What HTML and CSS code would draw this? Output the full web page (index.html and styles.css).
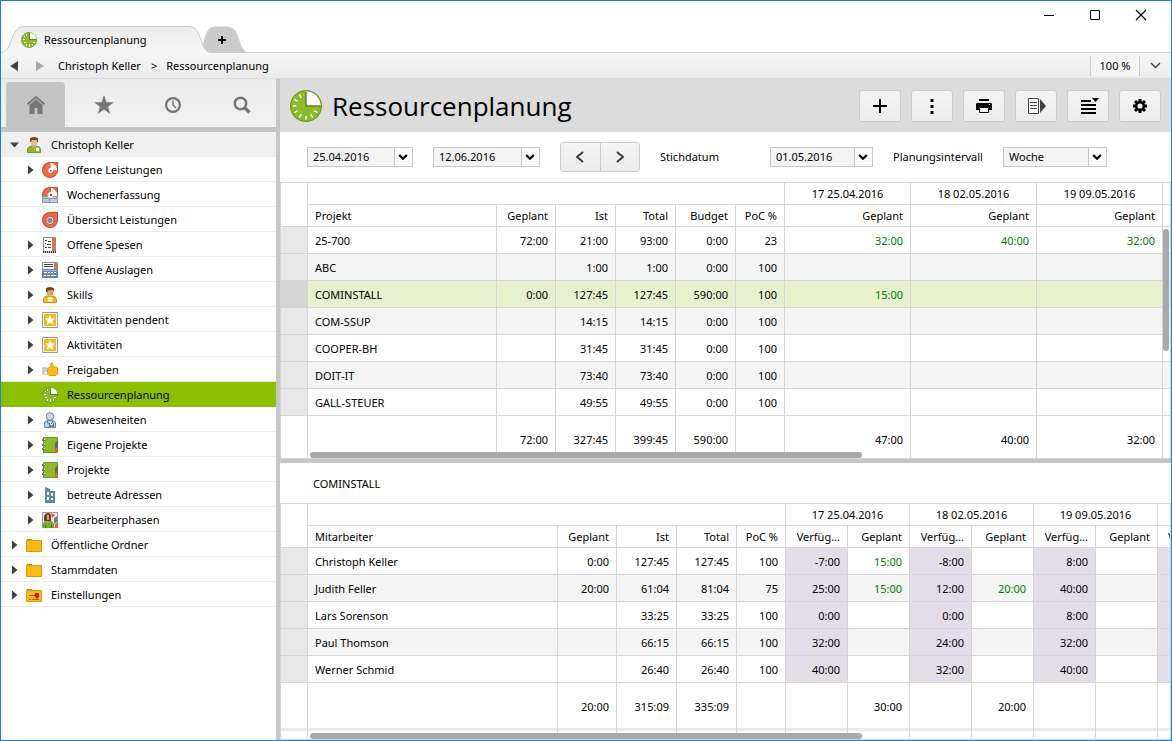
FILE: index.html
```html
<!DOCTYPE html>
<html lang="de">
<head>
<meta charset="utf-8">
<title>Ressourcenplanung</title>
<link rel="stylesheet" href="styles.css">
</head>
<body>
<svg class="sprite" aria-hidden="true">
  <symbol id="i-clock" viewBox="0 0 32 32">
    <circle cx="16" cy="16" r="15.4" fill="#8dba28" stroke="#6d9a22" stroke-width="1.2"/>
    <path d="M16 1.4A14.6 14.6 0 0 1 30.6 16H16z" fill="#fff"/>
    <path d="M16 2v14h14.5" fill="none" stroke="#5f7d2c" stroke-width="1.4"/>
    <g stroke="#fff" stroke-width="1.4"><path d="M16 26v3.500M3 16h3.500M11.300 7.800l-2-3.400M7.800 11.300L4.400 9.300M7.800 20.700l-3.400 2M11.300 24.200l-2 3.400M20.700 24.200l2 3.400M24.200 20.700l3.400 2"/></g>
  </symbol>
  <symbol id="i-clock-s" viewBox="0 0 16 16">
    <circle cx="8" cy="8" r="7.600" fill="#8dba28" stroke="#6d9a22" stroke-width=".8"/>
    <path d="M9 0.700A7.300 7.300 0 0 1 15.300 7H9z" fill="#fff"/>
    <path d="M8.500 1v6.500h6.700" fill="none" stroke="#5f7d2c"/>
    <g fill="#fff"><path d="M2 7h2v1H2zM3 4h1v1H3zM5 2h1v2H5zM3 11h2v-1H3zM5 12h1v2H5zM8 12h1v3H8zM11 12h1v2h-1zM12 10h2v1h-2z"/></g>
  </symbol>
  <symbol id="i-user" viewBox="0 0 16 16">
    <path d="M1.500 15.500v-3q0-3 4-3.500h5q4 .5 4 3.500v3z" fill="#8dba28" stroke="#6d9a22"/>
    <path d="M6 7h4v2.500L8 11 6 9.500z" fill="#dba57f"/><path d="M5 2h6v4q0 2.500-3 2.500T5 6z" fill="#e8b795"/>
    <path d="M4 5V1.500Q5 0 8 0t4 1.500V5h-1V3H6L5 5z" fill="#7b3f17"/><path d="M10 11h3v3h-3z" fill="#fff"/>
  </symbol>
  <symbol id="i-disc" viewBox="0 0 16 16">
    <path d="M8 0h8v8a8 8 0 1 1-8-8z" fill="#c94a2a"/><path d="M8 1h7v7a7 7 0 1 1-7-7z" fill="#ec6a43"/>
    <path d="M8.500 1h2.500l4 4.500V8L9 8.500z" fill="#fff"/><path d="M10.500 1l4.500 5V1z" fill="#ec6a43"/><path d="M12 1.500l2.500 3-1 1.500z" fill="#fff"/>
    <circle cx="8.500" cy="8.500" r="2.400" fill="#fff"/><path d="M8 8h1.500v1.500H8z" fill="#b5402a"/>
  </symbol>
  <symbol id="i-week" viewBox="0 0 16 16">
    <path d="M0 9V7a8 7.500 0 0 1 8-7h8v9z" fill="#c94a2a"/><path d="M1 9V7a7 6.500 0 0 1 7-6h7v8z" fill="#ec6a43"/>
    <path d="M9 1h2l4 4v4H9z" fill="#fff"/><path d="M11 1h4v5z" fill="#ec6a43"/>
    <path d="M0 9h16v7H0z" fill="#7f9bb5"/><path d="M1 10h14v1H1zM1 12h6v3H1zM8 12h7v3H8z" fill="#b8cad9"/>
    <circle cx="8.500" cy="8" r="2.800" fill="#fff"/><path d="M8 7h2v2H8z" fill="#b5402a"/>
  </symbol>
  <symbol id="i-target" viewBox="0 0 16 16">
    <path d="M8 0h8v8a8 8 0 1 1-8-8z" fill="#c94a2a"/><path d="M8 1h7v7a7 7 0 1 1-7-7z" fill="#ec6a43"/>
    <circle cx="8" cy="8.500" r="4" fill="#fff" stroke="#c94a2a"/><circle cx="8" cy="8.500" r="2.700" fill="#6f93b4"/>
  </symbol>
  <symbol id="i-receipt" viewBox="0 0 16 16">
    <path d="M1.500.5h12V15h-12z" fill="#fff" stroke="#8b8b8b"/>
    <path d="M10 1h3v13h-3z" fill="#ec6a43"/><path d="M3 3.500h2M6 4.500h3M3 6.500h1M5 7.500h4M3 10.500h2M6 10.500h3" stroke="#444"/>
    <path d="M1 15h13" stroke="#333" stroke-width="2" stroke-dasharray="1 1"/>
  </symbol>
  <symbol id="i-sheet" viewBox="0 0 16 16">
    <path d="M.5.5h15v8H.5z" fill="#fff" stroke="#8b8b8b"/><path d="M12 1h3v6h-3z" fill="#ec6a43"/>
    <path d="M2 2.500h9M2 4.500h9" stroke="#444"/><path d="M0 7h16v9H0z" fill="#6788a6"/>
    <path d="M1 8h14v1H1z" fill="#a9bfd2"/><path d="M2 10h3v1H2zM6 10h2v1H6zM9 10h2v1H9zM12 10h2v1h-2zM2 13h2v1H2zM5 13h3v1H5zM9 13h5v1H9z" fill="#fff"/>
  </symbol>
  <symbol id="i-skill" viewBox="0 0 16 16">
    <path d="M1.500 15.500v-3Q2 9 5 9h6q3 0 3.500 3.500v3z" fill="#fbb914" stroke="#c8921a"/>
    <path d="M5 2h6v4q0 3-3 3T5 6z" fill="#dca07a"/><path d="M4 5V1.500Q5 0 8 0t4 1.500V5l-1-2H7L5 5z" fill="#7b3f17"/>
    <path d="M7 10v5M9 10v5M5.500 11.500h5M5.500 13.500h5" stroke="#fff"/>
  </symbol>
  <symbol id="i-star-box" viewBox="0 0 16 16">
    <path d="M.5.5h15v15H.5z" fill="#fff" stroke="#999"/><path d="M2 2h12v12H2z" fill="#fbb914"/>
    <path d="M8 3l1.500 3.200 3.500.4-2.500 2.400.7 3.600L8 10.800l-3.200 1.800.7-3.600L3 6.600l3.500-.4z" fill="#fff"/>
  </symbol>
  <symbol id="i-thumb" viewBox="0 0 16 16">
    <path d="M5.500 6.500L8.500 5l.5-4q2-.5 2 1.500V5h4l.5 1v6l-1.500 1.500H7L5.500 12z" fill="#fbb914" stroke="#dc9d14"/>
    <path d="M0 5h5v8H2q-2 0-2-2z" fill="#b9cfe2"/><path d="M2.500 11h3M4 9.500v3" stroke="#fff"/>
  </symbol>
  <symbol id="i-absent" viewBox="0 0 16 16">
    <path d="M2.500 15.500V11q0-2 3.500-2.500h4q3.500.5 3.500 2.500v4.500z" fill="#b9cfe2" stroke="#6788a6"/>
    <circle cx="8" cy="4.500" r="3.800" fill="#c8d9e8" stroke="#6788a6"/>
    <path d="M5.500 9v2l2 1.500M10.500 9v2" fill="none" stroke="#6788a6"/><path d="M7 11h5v4H7z" fill="#557a9b"/><path d="M8.500 11v1.500h2V11M9 14h1" fill="none" stroke="#fff"/>
  </symbol>
  <symbol id="i-book" viewBox="0 0 16 16">
    <path d="M1.500.5h14v15h-14z" fill="#8dba28" stroke="#6d9a22"/>
    <path d="M0 3h3M0 8h3M0 12h3" stroke="#707070" stroke-width="2"/><path d="M2 2h1v1H2zM2 7h1v1H2zM2 11h1v1H2z" fill="#e8e8e8"/>
    <path d="M13 6l3-3v7l-3 2z" fill="#666"/><path d="M13 12l3-1v5h-3z" fill="#ec5a33"/>
  </symbol>
  <symbol id="i-building" viewBox="0 0 16 16">
    <path d="M3 0l5 2v2h5v12H3z" fill="#5f86a9"/><path d="M5 5h2v3H5zM9 6h2v3H9zM5 10h2v3H5zM9 11h2v2H9z" fill="#fff"/>
  </symbol>
  <symbol id="i-phase" viewBox="0 0 16 16">
    <path d="M0 0h16v16H0z" fill="#999"/><path d="M1 1h14v14H1z" fill="#eee"/>
    <path d="M2 9V4q1-3 4-3 3 0 3 3v6z" fill="#70401f"/><path d="M5 3h2v5H5z" fill="#dca07a"/>
    <path d="M1 16v-4q1-3 3-3l2 2 2-2q3 0 4 3v4z" fill="#79ad20"/><path d="M9 1l4 2-3 3z" fill="#e6512c"/>
    <path d="M12 6l3-2v6l-3 2z" fill="#777"/><path d="M13 12l3-2v6h-3z" fill="#ec5a33"/><path d="M3 13h1v3H3zM9 12h1v4H9z" fill="#456b14"/>
  </symbol>
  <symbol id="i-folder" viewBox="0 0 16 16">
    <path d="M1 4V2h5v2z" fill="#b88a1c"/><path d="M.5 3.500h15v11H.5z" fill="#fbb914" stroke="#d5991b"/>
  </symbol>
  <symbol id="i-config" viewBox="0 0 16 16">
    <path d="M1 4V2h5v2z" fill="#b88a1c"/><path d="M.5 3.500h15v11H.5z" fill="#fbb914" stroke="#d5991b"/>
    <path d="M3 8.500h7M3 12.500h2M6 12.500h7" stroke="#8a6a24"/><path d="M9 6h4v4l-2 2-2-2z" fill="#c3201a"/>
  </symbol>
  <symbol id="i-right" viewBox="0 0 6 10"><path d="M0 .5l5.500 4.500L0 9.500z" fill="#404040"/></symbol>
  <symbol id="i-open" viewBox="0 0 9 6"><path d="M0 .5h9L4.500 5.500z" fill="#404040"/></symbol>
  <symbol id="i-drop" viewBox="0 0 10 8"><path d="M1.200 2L5 5.700 8.800 2" fill="none" stroke="#000" stroke-width="2.200"/></symbol>
</svg>

<div class="window">
  <header class="titlebar">
    <svg class="tab-shapes" width="260" height="27" aria-hidden="true">
      <defs><linearGradient id="tabfill" x1="0" y1="0" x2="0" y2="1"><stop offset="0" stop-color="#ececec"/><stop offset="1" stop-color="#f6f6f6"/></linearGradient></defs>
      <path d="M198 26.500C202 24 203 8 208 3Q210 .5 214 .5H225Q230 .5 233 3C238 8 239 23 246 26.500z" fill="#cbcbcb"/>
      <path d="M-1 26.500C12 26 9 1 22 .5H188C202 1 198 24 209 26.500L209 28H-1z" fill="url(#tabfill)"/>
      <path d="M0 26.500C12 26 9 1 22 .5H188C202 1 198 24 209 26.500H260" fill="none" stroke="#c9c9c9"/>
    </svg>
    <nav class="tabs">
      <button class="tab"><svg width="16" height="16"><use href="#i-clock-s"/></svg>Ressourcenplanung</button>
      <button class="tab-add" aria-label="Neuer Tab"><svg width="8" height="8"><path d="M4 0v8M0 4h8" stroke="#000" stroke-width="2"/></svg></button>
    </nav>
    <div class="win-buttons">
      <button aria-label="Minimieren"><svg width="12" height="12"><path d="M1 6.500h10" stroke="#000"/></svg></button>
      <button aria-label="Maximieren"><svg width="12" height="12"><path d="M1.500 1.500h9v9h-9z" fill="none" stroke="#000"/></svg></button>
      <button aria-label="Schliessen"><svg width="12" height="12"><path d="M1 1l10 10M11 1L1 11" stroke="#000" stroke-width="1.100"/></svg></button>
    </div>
  </header>

  <nav class="crumbs">
    <button aria-label="Zurück"><svg width="8" height="10"><path d="M8 0v10L0 5z" fill="#404040"/></svg></button>
    <button aria-label="Vorwärts"><svg width="8" height="10"><path d="M0 0v10l8-5z" fill="#a8a8a8"/></svg></button>
    <a href="#">Christoph Keller</a><span>&gt;</span><a href="#">Ressourcenplanung</a>
    <button class="zoom">100 %</button>
    <button class="zoom-open" aria-label="Zoomstufe wählen"><svg width="11" height="7"><path d="M1 1l4.500 4.500L10 1" fill="none" stroke="#404040" stroke-width="1.400"/></svg></button>
  </nav>

  <div class="body">
    <aside class="sidebar">
      <div class="side-tabs">
        <button class="active" aria-label="Start"><svg width="20" height="20" fill="#757575"><path d="M10 3.800L3.500 9.500V19h5v-6h3v6h5V9.500z"/><path d="M1.500 9.300L10 2l8.500 7.300" fill="none" stroke="#757575" stroke-width="1.800"/><path d="M2.500 10.300L10 3.800l7.500 6.500" fill="none" stroke="#c4c4c4" stroke-width=".8"/></svg></button>
        <button aria-label="Favoriten"><svg width="20" height="20" fill="#757575"><path d="M10 0l2.500 7.200H20l-6 4.600L16.200 19 10 14.600 3.800 19 6 11.800 0 7.200h7.500z"/></svg></button>
        <button aria-label="Verlauf"><svg width="18" height="18" fill="none" stroke="#757575"><circle cx="9" cy="9" r="6.900" stroke-width="2.200"/><path d="M9 4.500V9l3 3" stroke-width="1.400"/></svg></button>
        <button aria-label="Suche"><svg width="18" height="18" fill="none" stroke="#757575"><circle cx="7.500" cy="7.500" r="5.700" stroke-width="2.500"/><path d="M11.500 11.500l5 5" stroke-width="3.200"/></svg></button>
      </div>
      <ul class="tree">
        <li><a class="root" href="#"><span class="arrow"><svg width="9" height="6"><use href="#i-open"/></svg></span><svg class="ico"><use href="#i-user"/></svg>Christoph Keller</a></li>
        <li><a class="sub" href="#"><span class="arrow"><svg width="6" height="10"><use href="#i-right"/></svg></span><svg class="ico"><use href="#i-disc"/></svg>Offene Leistungen</a></li>
        <li><a class="sub" href="#"><span class="arrow"></span><svg class="ico"><use href="#i-week"/></svg>Wochenerfassung</a></li>
        <li><a class="sub" href="#"><span class="arrow"></span><svg class="ico"><use href="#i-target"/></svg>Übersicht Leistungen</a></li>
        <li><a class="sub" href="#"><span class="arrow"><svg width="6" height="10"><use href="#i-right"/></svg></span><svg class="ico"><use href="#i-receipt"/></svg>Offene Spesen</a></li>
        <li><a class="sub" href="#"><span class="arrow"><svg width="6" height="10"><use href="#i-right"/></svg></span><svg class="ico"><use href="#i-sheet"/></svg>Offene Auslagen</a></li>
        <li><a class="sub" href="#"><span class="arrow"><svg width="6" height="10"><use href="#i-right"/></svg></span><svg class="ico"><use href="#i-skill"/></svg>Skills</a></li>
        <li><a class="sub" href="#"><span class="arrow"><svg width="6" height="10"><use href="#i-right"/></svg></span><svg class="ico"><use href="#i-star-box"/></svg>Aktivitäten pendent</a></li>
        <li><a class="sub" href="#"><span class="arrow"><svg width="6" height="10"><use href="#i-right"/></svg></span><svg class="ico"><use href="#i-star-box"/></svg>Aktivitäten</a></li>
        <li><a class="sub" href="#"><span class="arrow"><svg width="6" height="10"><use href="#i-right"/></svg></span><svg class="ico"><use href="#i-thumb"/></svg>Freigaben</a></li>
        <li><a class="sub selected" href="#"><span class="arrow"></span><svg class="ico"><use href="#i-clock-s"/></svg>Ressourcenplanung</a></li>
        <li><a class="sub" href="#"><span class="arrow"><svg width="6" height="10"><use href="#i-right"/></svg></span><svg class="ico"><use href="#i-absent"/></svg>Abwesenheiten</a></li>
        <li><a class="sub" href="#"><span class="arrow"><svg width="6" height="10"><use href="#i-right"/></svg></span><svg class="ico"><use href="#i-book"/></svg>Eigene Projekte</a></li>
        <li><a class="sub" href="#"><span class="arrow"><svg width="6" height="10"><use href="#i-right"/></svg></span><svg class="ico"><use href="#i-book"/></svg>Projekte</a></li>
        <li><a class="sub" href="#"><span class="arrow"><svg width="6" height="10"><use href="#i-right"/></svg></span><svg class="ico"><use href="#i-building"/></svg>betreute Adressen</a></li>
        <li><a class="sub" href="#"><span class="arrow"><svg width="6" height="10"><use href="#i-right"/></svg></span><svg class="ico"><use href="#i-phase"/></svg>Bearbeiterphasen</a></li>
        <li><a href="#"><span class="arrow"><svg width="6" height="10"><use href="#i-right"/></svg></span><svg class="ico"><use href="#i-folder"/></svg>Öffentliche Ordner</a></li>
        <li><a href="#"><span class="arrow"><svg width="6" height="10"><use href="#i-right"/></svg></span><svg class="ico"><use href="#i-folder"/></svg>Stammdaten</a></li>
        <li><a href="#"><span class="arrow"><svg width="6" height="10"><use href="#i-right"/></svg></span><svg class="ico"><use href="#i-config"/></svg>Einstellungen</a></li>
      </ul>
    </aside>

    <main class="main">
      <div class="page-head">
        <svg width="32" height="32"><use href="#i-clock"/></svg>
        <h1>Ressourcenplanung</h1>
        <div class="tools">
          <button aria-label="Neu"><svg width="20" height="20"><path d="M10 3v14M3 10h14" stroke="#000" stroke-width="2"/></svg></button>
          <button aria-label="Mehr"><svg width="20" height="20"><path d="M8.500 3h3v3h-3zM8.500 9h3v3h-3zM8.500 15h3v3h-3z"/></svg></button>
          <button aria-label="Drucken"><svg width="20" height="20"><path d="M5 3h10v2H5zM3 7h14l1 1v6h-3v-3H5v3H2V8z"/><path d="M5.500 11.500h9v5h-9z" fill="#fff" stroke="#000"/><path d="M15 8h1v1h-1z" fill="#fff"/></svg></button>
          <button aria-label="Export"><svg width="20" height="20"><path d="M2.500 2.500h10v15h-10z" fill="#fff" stroke="#404040"/><path d="M4 6.500h7M4 9.500h7M4 12.500h7" stroke="#404040"/><path d="M14 3l6 7-6 7z" fill="#404040"/></svg></button>
          <button aria-label="Ansicht"><svg width="20" height="20"><path d="M3 5h10M3 9h15M3 13h15M3 17h15" stroke="#000" stroke-width="2"/><path d="M14 2h7l-3.500 4z"/></svg></button>
          <button aria-label="Einstellungen"><svg width="20" height="20"><circle cx="10" cy="10" r="5"/><path d="M10 3v14M3 10h14M5 5l10 10M15 5L5 15" stroke="#000" stroke-width="3"/><circle cx="10" cy="10" r="2.600" fill="#f0f0f0"/></svg></button>
        </div>
      </div>

      <form class="filters">
        <span class="combo from"><select aria-label="Von"><option>25.04.2016</option></select><svg width="10" height="8"><use href="#i-drop"/></svg></span>
        <span class="combo to"><select aria-label="Bis"><option>12.06.2016</option></select><svg width="10" height="8"><use href="#i-drop"/></svg></span>
        <div class="pager">
          <button type="button" aria-label="Zurück"><svg width="12" height="12"><path d="M9 1L3 6l6 5" fill="none" stroke="#333" stroke-width="1.800"/></svg></button>
          <button type="button" aria-label="Weiter"><svg width="12" height="12"><path d="M3 1l6 5-6 5" fill="none" stroke="#333" stroke-width="1.800"/></svg></button>
        </div>
        <label class="key" for="key-date">Stichdatum</label>
        <span class="combo date"><select id="key-date"><option>01.05.2016</option></select><svg width="10" height="8"><use href="#i-drop"/></svg></span>
        <label class="interval" for="interval">Planungsintervall</label>
        <span class="combo step"><select id="interval"><option>Woche</option></select><svg width="10" height="8"><use href="#i-drop"/></svg></span>
      </form>

      <section class="pane projects">
        <table>
          <colgroup><col class="w27"><col class="w189"><col class="w59"><col class="w60"><col class="w60"><col class="w60"><col class="w49"><col class="w126"><col class="w126"><col class="w126"><col></colgroup>
          <thead>
            <tr><td rowspan="2"></td><th colspan="6"></th><th class="wk">17 25.04.2016</th><th class="wk">18 02.05.2016</th><th class="wk">19 09.05.2016</th><th></th></tr>
            <tr><th class="name">Projekt</th><th>Geplant</th><th>Ist</th><th>Total</th><th>Budget</th><th>PoC %</th><th>Geplant</th><th>Geplant</th><th>Geplant</th><th></th></tr>
          </thead>
          <tbody>
            <tr><td></td><td>25-700</td><td>72:00</td><td>21:00</td><td>93:00</td><td>0:00</td><td>23</td><td class="plan">32:00</td><td class="plan">40:00</td><td class="plan">32:00</td><td></td></tr>
            <tr><td></td><td>ABC</td><td></td><td>1:00</td><td>1:00</td><td>0:00</td><td>100</td><td></td><td></td><td></td><td></td></tr>
            <tr class="current"><td></td><td>COMINSTALL</td><td>0:00</td><td>127:45</td><td>127:45</td><td>590:00</td><td>100</td><td class="plan">15:00</td><td></td><td></td><td></td></tr>
            <tr><td></td><td>COM-SSUP</td><td></td><td>14:15</td><td>14:15</td><td>0:00</td><td>100</td><td></td><td></td><td></td><td></td></tr>
            <tr><td></td><td>COOPER-BH</td><td></td><td>31:45</td><td>31:45</td><td>0:00</td><td>100</td><td></td><td></td><td></td><td></td></tr>
            <tr><td></td><td>DOIT-IT</td><td></td><td>73:40</td><td>73:40</td><td>0:00</td><td>100</td><td></td><td></td><td></td><td></td></tr>
            <tr><td></td><td>GALL-STEUER</td><td></td><td>49:55</td><td>49:55</td><td>0:00</td><td>100</td><td></td><td></td><td></td><td></td></tr>
          </tbody>
          <tfoot>
            <tr class="totals"><td></td><td></td><td>72:00</td><td>327:45</td><td>399:45</td><td>590:00</td><td></td><td>47:00</td><td>40:00</td><td>32:00</td><td></td></tr>
          </tfoot>
        </table>
        <div class="thumb across"></div>
        <div class="thumb down"></div>
      </section>

      <h2>COMINSTALL</h2>

      <section class="pane staff">
        <table>
          <colgroup><col class="w27"><col class="w250"><col class="w59"><col class="w60"><col class="w60"><col class="w49"><col class="w62"><col class="w62"><col class="w62"><col class="w62"><col class="w62"><col class="w62"><col></colgroup>
          <thead>
            <tr><td rowspan="2"></td><th colspan="5"></th><th class="wk" colspan="2">17 25.04.2016</th><th class="wk" colspan="2">18 02.05.2016</th><th class="wk" colspan="2">19 09.05.2016</th><th></th></tr>
            <tr><th class="name">Mitarbeiter</th><th>Geplant</th><th>Ist</th><th>Total</th><th>PoC %</th><th>Verfüg...</th><th>Geplant</th><th>Verfüg...</th><th>Geplant</th><th>Verfüg...</th><th>Geplant</th><th class="cut">Verfüg...</th></tr>
          </thead>
          <tbody>
            <tr><td></td><td>Christoph Keller</td><td>0:00</td><td>127:45</td><td>127:45</td><td>100</td><td class="free">-7:00</td><td class="plan">15:00</td><td class="free">-8:00</td><td></td><td class="free">8:00</td><td></td><td class="free"></td></tr>
            <tr><td></td><td>Judith Feller</td><td>20:00</td><td>61:04</td><td>81:04</td><td>75</td><td class="free">25:00</td><td class="plan">15:00</td><td class="free">12:00</td><td class="plan">20:00</td><td class="free">40:00</td><td></td><td class="free"></td></tr>
            <tr><td></td><td>Lars Sorenson</td><td></td><td>33:25</td><td>33:25</td><td>100</td><td class="free">0:00</td><td></td><td class="free">0:00</td><td></td><td class="free">8:00</td><td></td><td class="free"></td></tr>
            <tr><td></td><td>Paul Thomson</td><td></td><td>66:15</td><td>66:15</td><td>100</td><td class="free">32:00</td><td></td><td class="free">24:00</td><td></td><td class="free">32:00</td><td></td><td class="free"></td></tr>
            <tr><td></td><td>Werner Schmid</td><td></td><td>26:40</td><td>26:40</td><td>100</td><td class="free">40:00</td><td></td><td class="free">32:00</td><td></td><td class="free">40:00</td><td></td><td class="free"></td></tr>
          </tbody>
          <tfoot>
            <tr class="totals"><td></td><td></td><td>20:00</td><td>315:09</td><td>335:09</td><td></td><td></td><td>30:00</td><td></td><td>20:00</td><td></td><td></td><td></td></tr>
            <tr class="band"><td></td><td></td><td></td><td></td><td></td><td></td><td></td><td></td><td></td><td></td><td></td><td></td><td></td></tr>
            <tr class="rest"><td></td><td></td><td></td><td></td><td></td><td></td><td></td><td></td><td></td><td></td><td></td><td></td><td></td></tr>
          </tfoot>
        </table>
        <div class="thumb across"></div>
      </section>
    </main>
  </div>
</div>
</body>
</html>
```

FILE: styles.css
```css
* { box-sizing: border-box; }

body {
  margin: 0;
  font: 11px/16px "Noto Sans", "Open Sans", sans-serif;
  color: #000;
  background: #fff;
}

button, select { font: inherit; color: inherit; }

button {
  display: flex;
  align-items: center;
  justify-content: center;
  padding: 0;
  border: 0;
  background: none;
}

a { color: inherit; text-decoration: none; }
svg { display: block; flex: none; }
.sprite { position: absolute; width: 0; height: 0; }

.window {
  display: flex;
  flex-direction: column;
  min-height: 100vh;
  border: 1px solid #1883d7;
}

/* Title bar */
.titlebar {
  position: relative;
  display: flex;
  justify-content: space-between;
  height: 52px;
  border-bottom: 1px solid #c9c9c9;
}
.tab-shapes { position: absolute; left: 0; bottom: -1px; }
.tabs { position: relative; display: flex; align-items: flex-end; }
.tab { justify-content: flex-start; gap: 7px; width: 200px; height: 24px; padding-left: 20px; }
.tab-add { width: 42px; height: 24px; }
.win-buttons { display: flex; height: 28px; padding-right: 7px; }
.win-buttons button { width: 46px; }

/* Breadcrumbs */
.crumbs {
  display: flex;
  align-items: center;
  height: 26px;
  border-bottom: 1px solid #dadada;
  background: linear-gradient(#f6f6f6, #ebebeb);
}
.crumbs button:first-child { margin: 0 18px 0 9px; }
.crumbs a { margin-left: 14px; }
.crumbs span { margin: 0 -5px 0 10px; }
.crumbs .zoom {
  width: 50px;
  height: 20px;
  margin-left: auto;
  border: solid #c9c9c9;
  border-width: 0 1px;
  background: #f5f5f5;
}
.crumbs .zoom-open { width: 31px; height: 20px; }

.body { display: flex; flex: 1; }

/* Sidebar */
.sidebar {
  flex: none;
  width: 279px;
  border-right: 4px solid #c6c6c6;
}
.side-tabs {
  display: grid;
  grid-template-columns: 59px 78px 59px 79px;
  height: 53px;
  padding: 3px 0 0 5px;
  border-bottom: 5px solid #c4c4c4;
  background: linear-gradient(#ebebeb, #f1f1f1);
  overflow: hidden;
}
.side-tabs .active { border-radius: 4px 4px 0 0; background: #c4c4c4; }

.tree { margin: 0; padding: 0; list-style: none; }
.tree a {
  display: flex;
  align-items: center;
  height: 25px;
  padding: 1px 0 0 8px;
  border-bottom: 1px solid #ececec;
}
.tree .sub { padding-left: 24px; }
.tree .root { background: #efefef; }
.tree .selected { border-color: #8bbf00; background: #8bbf00; }
.arrow { display: flex; justify-content: center; width: 11px; margin-right: 6px; }
.ico { width: 16px; height: 16px; margin-right: 9px; }

/* Main area */
.main { display: flex; flex: 1; flex-direction: column; min-width: 0; }
.page-head {
  display: flex;
  align-items: center;
  height: 53px;
  padding: 0 10px;
  background: #dcdcdc;
}
h1 { margin: 0 0 0 10px; font: 400 26px/32px "Open Sans", "Noto Sans", sans-serif; }
.tools { display: flex; gap: 10px; margin-left: auto; }
.tools button, .pager {
  border: 1px solid #cbcbcb;
  border-radius: 3px;
  background: linear-gradient(#f4f4f4, #ebebeb);
}
.tools button { width: 42px; height: 32px; }
.tools svg { overflow: visible; }

.filters { display: flex; align-items: center; height: 50px; padding-left: 27px; }
.combo { display: grid; grid-template-columns: 1fr 18px; align-items: center; }
.combo select {
  grid-area: 1 / 1 / 2 / 3;
  width: 100%;
  height: 20px;
  padding: 0 0 0 5px;
  border: 1px solid #c8c8c8;
  border-radius: 0;
  outline: 0;
  appearance: none;
  background: linear-gradient(90deg, #c8c8c8 1px, #f8f8f8 1px) right / 18px 100% no-repeat #f3f3f3;
}
.combo svg { grid-area: 1 / 2; margin-left: 3px; pointer-events: none; }
.from { width: 106px; margin-right: 20px; }
.to { width: 107px; margin-right: 20px; }
.date { width: 103px; margin-right: 20px; }
.step { width: 104px; }
.key { width: 110px; }
.interval { width: 110px; }
.pager { display: flex; width: 80px; height: 30px; margin-right: 20px; }
.pager button { flex: 1; }
.pager button + button { border-left: 1px solid #cbcbcb; }

/* Grids */
.pane {
  position: relative;
  overflow: hidden;
  border: solid #d5d5d5;
  border-width: 1px 0 0 1px;
}
.projects { border-bottom: 4px solid #c6c6c6; }
.staff { flex: 1; }
table { width: 100%; table-layout: fixed; border-spacing: 0; }
th, td {
  height: 27px;
  padding: 0 7px;
  border: solid #d5d5d5;
  border-width: 0 1px 1px 0;
  font-weight: 400;
  text-align: right;
  white-space: nowrap;
}
th { height: 22px; }
th.wk { text-align: center; }
th.name, td:nth-child(2) { text-align: left; }
th:last-child, td:last-child { padding: 0; }
th.cut { padding-left: 10px; overflow: hidden; text-align: left; }
tbody td { padding-top: 2px; }
tbody td:first-child { background: #e8e8e8; }
tbody tr:nth-child(even) { background: #f4f4f4; }
tbody .current { background: #e7f1cd; }
tbody .current td:first-child { background: #d5d5d5; }
tbody .free { background: #e3dde8; }
.plan { color: #008000; }
.totals td { height: 43px; padding-top: 6px; }
.staff .totals td { height: 45px; padding-top: 3px; border-bottom: 0; }
.band td { height: 3px; padding: 0; border-bottom: 0; background: #ebebeb; }
.rest td { height: 9px; padding: 0; }

.w27 { width: 27px; }
.w49 { width: 49px; }
.w59 { width: 59px; }
.w60 { width: 60px; }
.w62 { width: 62px; }
.w126 { width: 126px; }
.w189 { width: 189px; }
.w250 { width: 250px; }

.thumb { position: absolute; border-radius: 3px; background: #a9a9a9; }
.across { left: 29px; bottom: 1px; width: 62%; height: 6px; }
.down { top: 46px; right: 2px; width: 6px; height: 122px; }

h2 { margin: 0; padding: 13px 33px 11px; font-size: 11px; line-height: 16px; font-weight: 400; }
```
